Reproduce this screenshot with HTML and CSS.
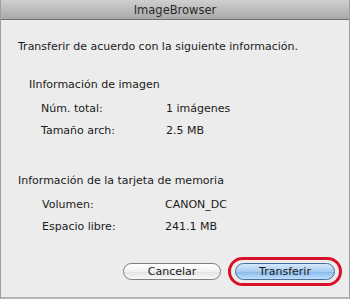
FILE: index.html
```html
<!DOCTYPE html>
<html>
<head>
<meta charset="utf-8">
<link rel="stylesheet" href="styles.css">
</head>
<body>
<div class="window">
  <div class="titlebar">ImageBrowser</div>
  <div class="content">
    <p class="intro">Transferir de acuerdo con la siguiente información.</p>
    <div class="group group-image">
      <div class="group-title">IInformación de imagen</div>
      <div class="row"><span class="label">Núm. total:</span><span class="value">1 imágenes</span></div>
      <div class="row"><span class="label">Tamaño arch:</span><span class="value">2.5 MB</span></div>
    </div>
    <div class="group group-card">
      <div class="group-title">Información de la tarjeta de memoria</div>
      <div class="row"><span class="label">Volumen:</span><span class="value">CANON_DC</span></div>
      <div class="row"><span class="label">Espacio libre:</span><span class="value">241.1 MB</span></div>
    </div>
    <div class="buttons">
      <button class="btn btn-cancel">Cancelar</button>
      <span class="highlight"><button class="btn btn-default">Transferir</button></span>
    </div>
  </div>
</div>
</body>
</html>
```
FILE: styles.css
```css
html, body {
  margin: 0;
  padding: 0;
  background: #ececec;
}
body {
  font-family: "DejaVu Sans", "Liberation Sans", sans-serif;
  font-size: 11px;
  color: #1a1a1a;
}
.window {
  width: 350px;
  height: 299px;
  box-sizing: border-box;
  border-left: 1px solid #a0a0a0;
  border-right: 1px solid #a0a0a0;
  border-bottom: 2px solid #b4b4b4;
  background: #ececec;
  display: flex;
  flex-direction: column;
}
.titlebar {
  height: 19px;
  line-height: 20px;
  text-align: center;
  font-size: 11.5px;
  color: #2a2a2a;
  background: linear-gradient(#cfcfcf, #a9a9a9);
  border-bottom: 1px solid #707070;
}
.content {
  flex: 1;
  display: flex;
  flex-direction: column;
  padding: 0 0 0 17px;
}
.intro {
  margin: 20px 0 0 0;
  line-height: 14px;
}
.group {
  display: flex;
  flex-direction: column;
}
.group-image {
  margin: 24px 0 0 11px;
}
.group-card {
  margin: 36px 0 0 0;
}
.group-title {
  line-height: 14px;
  margin-bottom: 2px;
}
.row {
  display: flex;
  margin-top: 8px;
  line-height: 14px;
  padding-left: 12px;
}
.group-card .row {
  padding-left: 24px;
}
.label {
  width: 125px;
}
.group-card .label {
  width: 123px;
}
.buttons {
  display: flex;
  align-items: center;
  margin-top: 23px;
  padding-left: 105px;
  gap: 7px;
}
.btn {
  font-family: inherit;
  font-size: 11px;
  height: 17px;
  width: 98px;
  padding: 0;
  border-radius: 9px;
  color: #1a1a1a;
  line-height: 15px;
}
.btn-cancel {
  border: 1px solid #7d7d7d;
  background: linear-gradient(#ffffff 0%, #f2f2f2 50%, #e2e2e2 51%, #f8f8f8 100%);
}
.highlight {
  display: flex;
  padding: 3px 4px;
  border: 3px solid #d8102a;
  border-radius: 16px;
}
.btn-default {
  width: 100px;
  border: 1px solid #4a6e9c;
  background: linear-gradient(#d6e9fb 0%, #a6cdf1 50%, #86b8ea 51%, #bfe0fb 100%);
}
```
